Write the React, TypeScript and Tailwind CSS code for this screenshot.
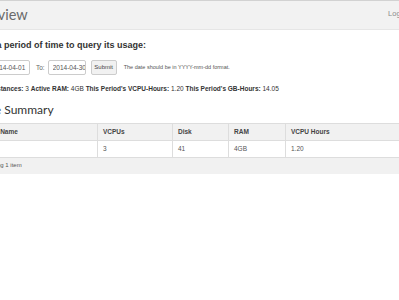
import React from 'react';

const cols = [
  { label: 'Instance Name', w: 'w-[133px]' },
  { label: 'VCPUs', w: 'w-[75px]' },
  { label: 'Disk', w: 'w-[56px]' },
  { label: 'RAM', w: 'w-[57px]' },
  { label: 'VCPU Hours', w: 'flex-1' },
];

const row = ['', '3', '41', '4GB', '1.20'];

const App: React.FC = () => {
  return (
    <div className="w-[399px] h-[300px] overflow-hidden bg-white" style={{ fontFamily: '"Liberation Sans", Arial, sans-serif' }}>
      <div className="-ml-[36px] w-[460px]">
        {/* page header */}
        <div className="h-[30px] bg-[#f2f2f2] border-t border-[#d2d2d2] border-b border-b-[#e6e6e6] flex items-center justify-between pr-[13px]">
          <h2 className="text-[14.5px] text-[#6a6a6a] pl-[2px] leading-none" style={{ fontFamily: 'Lato, sans-serif' }}>
            Overview
          </h2>
          <span className="text-[7.5px] text-[#8a8a8a] -mt-[3px]">Logout</span>
        </div>

        <div className="pl-[2px]">
          <h3
            className="mt-[11px] pl-[1.5px] text-[9px] font-bold text-[#333] leading-none"
            style={{ fontFamily: '"Liberation Sans Narrow", "Liberation Sans", Arial, sans-serif' }}
          >
            Select a period of time to query its usage:
          </h3>

          <div className="mt-[10px] flex items-center text-[6.5px] text-[#666]">
            <input
              readOnly
              value="2014-04-01"
              className="w-[64px] h-[15px] border border-[#ccc] rounded-[2px] pl-[25px] text-[6.5px] text-[#555]"
            />
            <span className="ml-[6px]">To:</span>
            <input
              readOnly
              value="2014-04-30"
              className="ml-[3px] w-[38px] h-[15px] border border-[#ccc] rounded-[2px] pl-[4px] text-[6.5px] text-[#555]"
            />
            <button className="ml-[5px] w-[26px] h-[15px] bg-[#f1f1f1] border border-[#ccc] rounded-[2px] text-[6px] text-[#444]">
              Submit
            </button>
            <span className="ml-[7px] text-[5.5px] text-[#555]">The date should be in YYYY-mm-dd format.</span>
          </div>

          <p className="mt-[11px] ml-[4px] text-[6.5px] text-[#333] leading-none">
            <b>Active Instances:</b> 3 <b>Active RAM:</b> 4GB <b>This Period's VCPU-Hours:</b> 1.20{' '}
            <b>This Period's GB-Hours:</b> 14.05
          </p>

          <h3 className="mt-[11px] pl-[3px] text-[12px] text-[#333] leading-none" style={{ fontFamily: 'Lato, sans-serif' }}>
            Usage Summary
          </h3>
        </div>

        <div className="mt-[7px] text-[6.5px] text-[#555]">
          <div className="flex h-[17px] bg-[#f1f1f1] border-t border-[#ddd] font-bold text-[#444]">
            {cols.map((c, i) => (
              <div key={c.label} className={`${c.w} flex items-center ${i > 0 ? 'px-[5px] border-l border-[#ddd]' : 'pl-[8px]'}`}>
                {c.label}
              </div>
            ))}
          </div>
          <div className="flex h-[17px] border-t border-[#ddd]">
            {row.map((v, i) => (
              <div key={i} className={`${cols[i].w} flex items-center px-[5px] ${i > 0 ? 'border-l border-[#ddd]' : ''}`}>
                {v}
              </div>
            ))}
          </div>
          <div className="h-[17px] bg-[#f1f1f1] border-t border-[#ddd] flex items-center pl-[12px] text-[6px] text-[#555]">
            Displaying 1 item
          </div>
        </div>
      </div>
    </div>
  );
};

export default App;
